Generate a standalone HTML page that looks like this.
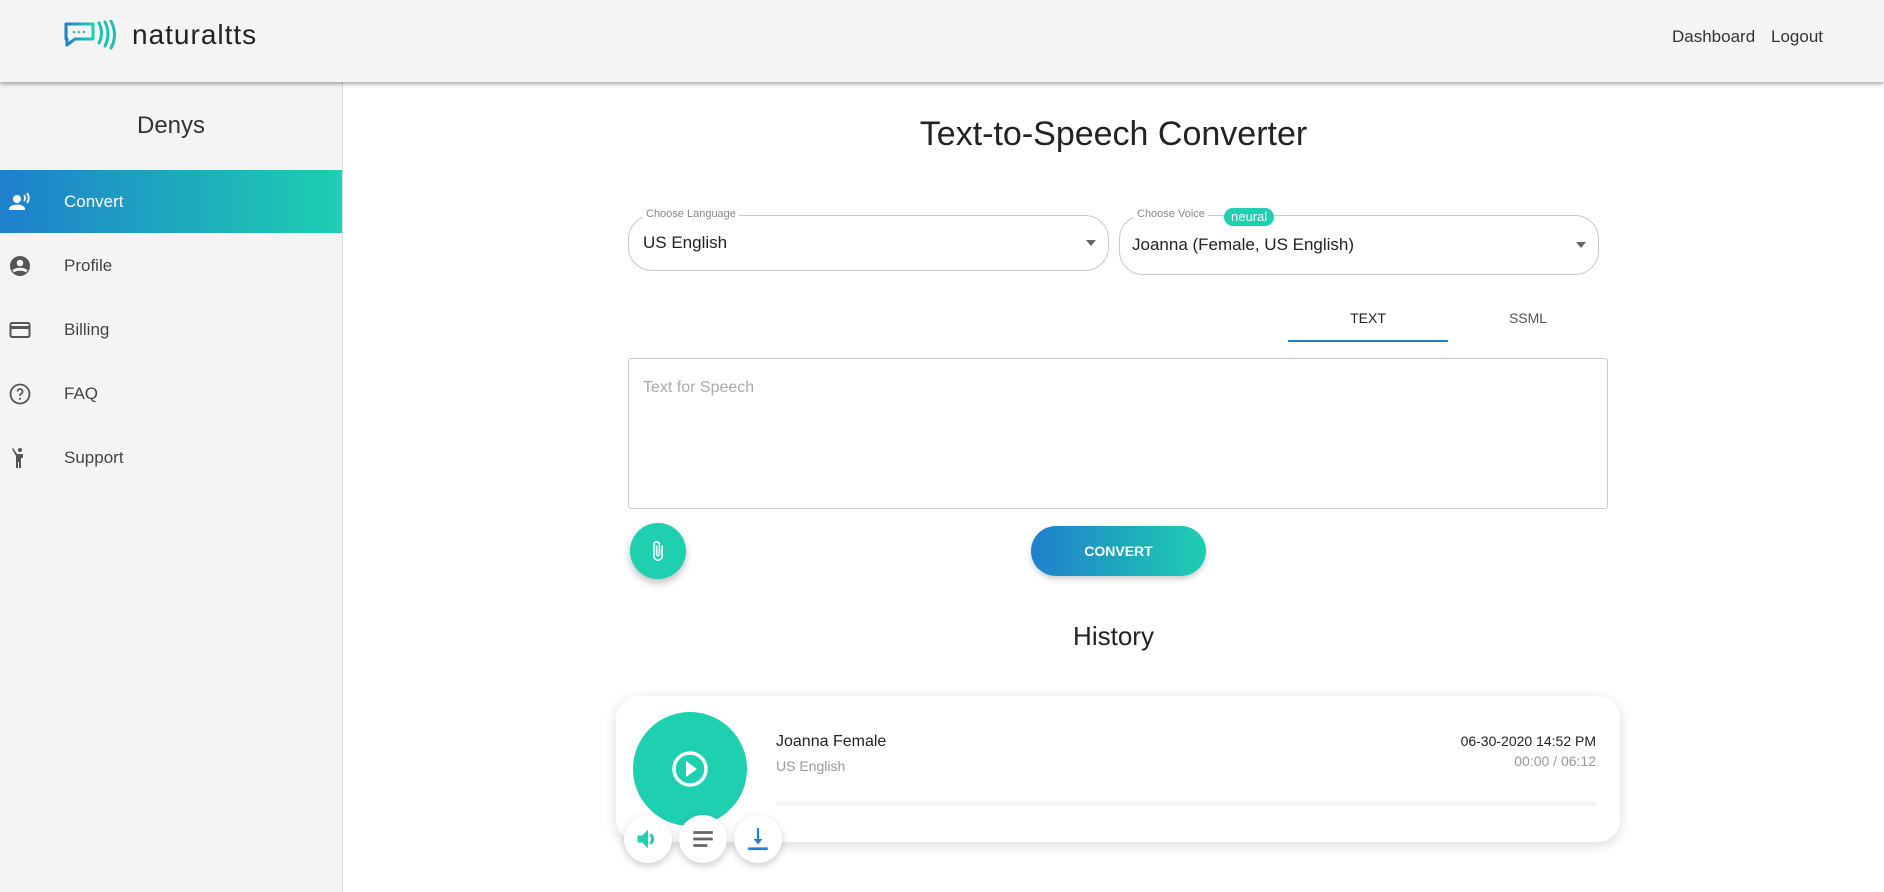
<!DOCTYPE html>
<html><head><meta charset="utf-8"><style>
*{box-sizing:border-box;margin:0;padding:0}
body{width:1884px;height:892px;overflow:hidden;background:#fff;font-family:"Liberation Sans",sans-serif;color:#222;position:relative}
.hdr{position:absolute;left:0;top:0;width:1884px;height:82px;background:#f4f4f4;box-shadow:0 2px 4px rgba(0,0,0,.35);z-index:5}
.side{position:absolute;left:0;top:82px;width:343px;height:810px;background:#f4f4f4;border-right:1px solid #ddd}
.abs{position:absolute}
.nav{position:absolute;left:0;width:342px;height:63px;display:flex;align-items:center;font-size:17px;color:#444}
.nav .ic{position:absolute;left:8px;width:24px;height:24px}
.nav span{position:absolute;left:64px}
.sel{position:absolute;border:1px solid #c8c8c8;border-radius:24px}
.lbl{position:absolute;top:-8px;background:#fff;font-size:11px;color:#888;padding:0 3px}
.arr{position:absolute;right:12px;top:50%;margin-top:-3px;border-left:5px solid transparent;border-right:5px solid transparent;border-top:6px solid #666}
.circ{position:absolute;border-radius:50%;background:#fff;box-shadow:0 3px 8px rgba(0,0,0,.2);display:flex;align-items:center;justify-content:center}
</style></head><body>
<div class="hdr">
 <svg class="abs" style="left:63px;top:20px" width="56" height="30" viewBox="0 0 56 30">
  <defs><linearGradient id="g" x1="0" x2="1"><stop offset="0" stop-color="#1f7fcc"/><stop offset="1" stop-color="#1ecfb0"/></linearGradient></defs>
  <path d="M3 4h27v15H12l-8 6v-6H3z" fill="none" stroke="url(#g)" stroke-width="3" stroke-linejoin="round"/>
  <circle cx="11" cy="12" r="1.3" fill="#5ab"/><circle cx="16" cy="12" r="1.3" fill="#5ab"/><circle cx="21" cy="12" r="1.3" fill="#5ab"/>
  <path d="M36 3q5 10 0 20M42 2q6 12 0 24M48 1q7 14 0 27" fill="none" stroke="#1ec0b6" stroke-width="3" stroke-linecap="round"/>
 </svg>
 <div class="abs" style="left:132px;top:19px;font-size:28px;letter-spacing:1px;color:#222">naturaltts</div>
 <div class="abs" style="left:1672px;top:27px;font-size:17px;color:#333">Dashboard</div>
 <div class="abs" style="left:1771px;top:27px;font-size:17px;color:#333">Logout</div>
</div>
<div class="side">
 <div class="abs" style="left:0;width:342px;top:30px;text-align:center;font-size:24px;color:#333">Denys</div>
 <div class="nav" style="top:88px;background:linear-gradient(90deg,#1f7fcc,#1ecfb0);color:#fff">
  <svg class="ic" viewBox="0 0 24 24" style="left:8px"><circle cx="9" cy="9" r="4" fill="#fff"/><path d="M1 19c0-3 5-4.5 8-4.5s8 1.5 8 4.5v1H1z" fill="#fff"/><path d="M16 5q2 3 0 6M19 3q3.5 5 0 10" stroke="#fff" stroke-width="1.8" fill="none"/></svg>
  <span>Convert</span></div>
 <div class="nav" style="top:152px"><svg class="ic" viewBox="0 0 24 24"><circle cx="12" cy="12" r="10" fill="#555"/><circle cx="12" cy="9" r="3.3" fill="#f4f4f4"/><path d="M5.5 17.5c2-3 11-3 13 0" stroke="#f4f4f4" stroke-width="3" fill="none"/></svg><span>Profile</span></div>
 <div class="nav" style="top:216px"><svg class="ic" viewBox="0 0 24 24"><rect x="2.5" y="5" width="19" height="14" rx="1.5" fill="none" stroke="#555" stroke-width="2"/><rect x="2.5" y="8" width="19" height="3" fill="#555"/></svg><span>Billing</span></div>
 <div class="nav" style="top:280px"><svg class="ic" viewBox="0 0 24 24"><circle cx="12" cy="12" r="9.5" fill="none" stroke="#555" stroke-width="1.8"/><path d="M9.5 9.5a2.5 2.5 0 1 1 3.5 2.3c-.8.4-1 1-1 2" stroke="#555" stroke-width="1.8" fill="none"/><circle cx="12" cy="16.8" r="1.1" fill="#555"/></svg><span>FAQ</span></div>
 <div class="nav" style="top:344px"><svg class="ic" viewBox="0 0 24 24"><circle cx="12" cy="4" r="2" fill="#555"/><path d="M5 2l4 6h6v4h-2v10h-2v-6h-1v6H8V10L4 3z" fill="#555"/></svg><span>Support</span></div>
</div>

<div class="abs" style="left:343px;width:1541px;top:115px;text-align:center;font-size:34px;color:#222">Text-to-Speech Converter</div>

<div class="sel" style="left:628px;top:215px;width:481px;height:56px">
 <div class="lbl" style="left:14px">Choose Language</div>
 <div class="abs" style="left:14px;top:17px;font-size:17px">US English</div><div class="arr"></div></div>
<div class="sel" style="left:1119px;top:215px;width:480px;height:60px">
 <div class="lbl" style="left:14px">Choose Voice</div>
 <div class="abs" style="left:104px;top:-8px;background:#1ecfb0;color:#fff;font-size:13px;border-radius:9px;padding:0 7px;height:18px;line-height:18px">neural</div>
 <div class="abs" style="left:12px;top:19px;font-size:17px">Joanna (Female, US English)</div><div class="arr"></div></div>

<div class="abs" style="left:1288px;width:160px;top:310px;text-align:center;font-size:14px;color:#222">TEXT</div>
<div class="abs" style="left:1288px;width:160px;top:340px;height:2px;background:#1f7fcc"></div>
<div class="abs" style="left:1448px;width:160px;top:310px;text-align:center;font-size:14px;color:#555">SSML</div>

<div class="abs" style="left:628px;top:358px;width:980px;height:151px;border:1px solid #c8c8c8;border-radius:3px">
 <div class="abs" style="left:14px;top:20px;font-size:16px;color:#aaa">Text for Speech</div></div>

<div class="circ" style="left:630px;top:523px;width:56px;height:56px;background:#1ecfb0;box-shadow:0 4px 8px rgba(0,0,0,.25)">
 <svg width="22" height="22" viewBox="0 0 24 24"><path d="M16.5 6v11.5a4.5 4.5 0 0 1-9 0V5a3 3 0 0 1 6 0v10.5a1.5 1.5 0 0 1-3 0V6" fill="none" stroke="#fff" stroke-width="1.8"/></svg></div>
<div class="abs" style="left:1031px;top:526px;width:175px;height:50px;border-radius:25px;background:linear-gradient(90deg,#1f7fcc,#1ecfb0);color:#fff;font-weight:bold;font-size:14px;text-align:center;line-height:50px;box-shadow:0 3px 6px rgba(0,0,0,.2)">CONVERT</div>

<div class="abs" style="left:343px;width:1541px;top:621px;text-align:center;font-size:26px;color:#222">History</div>

<div class="abs" style="left:616px;top:696px;width:1004px;height:146px;border-radius:22px;background:#fff;box-shadow:0 3px 12px rgba(0,0,0,.15)">
 <div class="abs" style="left:160px;top:37px;font-size:16px;color:#222">Joanna Female</div>
 <div class="abs" style="left:160px;top:62px;font-size:14px;color:#999">US English</div>
 <div class="abs" style="right:24px;top:37px;font-size:14px;color:#222">06-30-2020 14:52 PM</div>
 <div class="abs" style="right:24px;top:57px;font-size:14px;color:#999">00:00 / 06:12</div>
 <div class="abs" style="left:160px;right:24px;top:105px;height:5px;background:#f3f4f6"></div>
</div>
<div class="abs" style="left:633px;top:712px;width:114px;height:114px;border-radius:50%;background:#1ecfb0;display:flex;align-items:center;justify-content:center">
 <svg width="40" height="40" viewBox="0 0 40 40"><circle cx="20" cy="20" r="16" fill="none" stroke="#fff" stroke-width="3.5"/><path d="M16 12v16l11-8z" fill="#fff"/></svg></div>
<div class="circ" style="left:624px;top:815px;width:48px;height:48px"><svg width="28" height="28" viewBox="0 0 24 24"><path d="M3 9v6h4l5 5V4L7 9z" fill="#1ecfb0"/><path d="M14 8q4 4 0 8" stroke="#1ecfb0" stroke-width="2.5" fill="none"/></svg></div>
<div class="circ" style="left:679px;top:815px;width:48px;height:48px"><svg width="26" height="26" viewBox="0 0 24 24"><path d="M3 6h18M3 12h18M3 18h13" stroke="#666" stroke-width="2.5"/></svg></div>
<div class="circ" style="left:734px;top:815px;width:48px;height:48px"><svg width="26" height="26" viewBox="0 0 24 24"><path d="M12 2v14" stroke="#1f7fcc" stroke-width="2"/><path d="M8 12l4 5 4-5z" fill="#1f7fcc"/><path d="M3 21h18" stroke="#1f7fcc" stroke-width="2.5"/></svg></div>
</body></html>
